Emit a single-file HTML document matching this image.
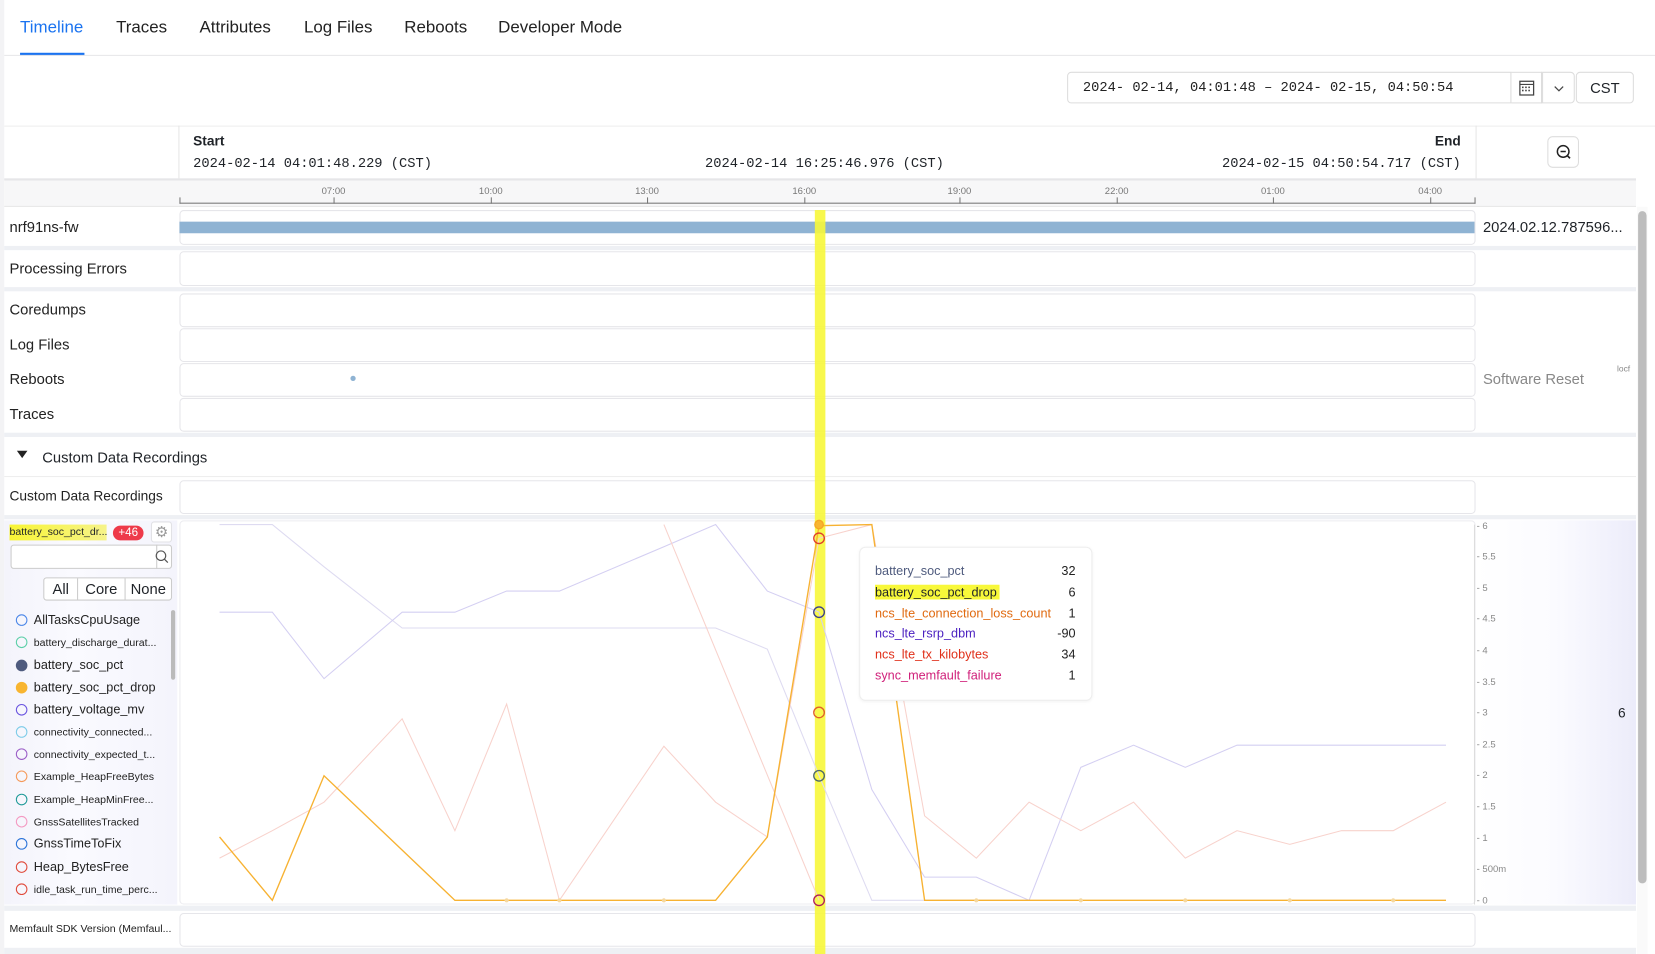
<!DOCTYPE html>
<html><head><meta charset="utf-8">
<style>
*{box-sizing:border-box;margin:0;padding:0}
html,body{width:1655px;height:954px;overflow:hidden;background:#fff;font-family:"Liberation Sans",sans-serif;color:#1f2328}
#w{position:absolute;left:0;top:0;width:1568px;height:904px;transform:scale(1.05548);transform-origin:0 0;background:#fff}
.a{position:absolute}
.tab{position:absolute;top:18px;font-size:16px;color:#222}
.mono{font-family:"Liberation Mono",monospace}
.lbl{position:absolute;left:9px;font-size:14px;color:#222}
.row{position:absolute;left:170px;width:1228px;border:1px solid #e6e6ea;border-radius:4px;background:#fff}
.gap{position:absolute;left:4px;width:1546px;background:#eef0f4}
.tick{position:absolute;top:176px;font-size:9px;color:#777;width:40px;text-align:center}
.tk{position:absolute;top:187px;width:1px;height:6px;background:#777}
.yl{position:absolute;left:1399px;font-size:9px;color:#888}
.li{position:absolute;left:15px;font-size:12px;color:#222;white-space:nowrap}
.li i{display:inline-block;width:11px;height:11px;border-radius:50%;border:1.5px solid;vertical-align:-2px;margin-right:6px}
.li.s{font-size:10px}
.tt{position:absolute;left:829px;font-size:12px}
.tv{position:absolute;left:960px;width:59px;text-align:right;font-size:12px;color:#222}
</style></head><body><div id="w">
<div class="a" style="left:0;top:0;width:4px;height:904px;background:#f3f3f5"></div>
<div class="tab" style="left:19px;color:#1a73f0">Timeline</div>
<div class="tab" style="left:110px">Traces</div>
<div class="tab" style="left:189px">Attributes</div>
<div class="tab" style="left:288px">Log Files</div>
<div class="tab" style="left:383px">Reboots</div>
<div class="tab" style="left:472px">Developer Mode</div>
<div class="a" style="left:19px;top:50px;width:61px;height:3px;background:#1a73f0"></div>
<div class="a" style="left:4px;top:52px;width:1564px;height:1px;background:#e8e8ea"></div>
<div class="a mono" style="left:1011px;top:68px;width:421px;height:30px;border:1px solid #ddd;border-radius:4px 0 0 4px;font-size:13px;padding:6px 14px;color:#222">2024- 02-14, 04:01:48 – 2024- 02-15, 04:50:54</div>
<div class="a" style="left:1432px;top:68px;width:29px;height:30px;border:1px solid #ddd;border-left:none">
<svg width="29" height="30"><rect x="8" y="8" width="13" height="13" fill="none" stroke="#444" stroke-width="1.2"/><line x1="8" y1="11" x2="21" y2="11" stroke="#444"/><g fill="#444"><rect x="10" y="13" width="1.5" height="1.5"/><rect x="13" y="13" width="1.5" height="1.5"/><rect x="16" y="13" width="1.5" height="1.5"/><rect x="10" y="16" width="1.5" height="1.5"/><rect x="13" y="16" width="1.5" height="1.5"/><rect x="16" y="16" width="1.5" height="1.5"/></g></svg></div>
<div class="a" style="left:1461px;top:68px;width:31px;height:30px;border:1px solid #ddd;border-radius:0 4px 4px 0"><svg width="31" height="30"><path d="M11 13l4 4 4-4" fill="none" stroke="#444" stroke-width="1.2"/></svg></div>
<div class="a" style="left:1493px;top:68px;width:55px;height:30px;border:1px solid #ddd;border-radius:4px;font-size:14px;text-align:center;line-height:28px">CST</div>
<div class="a" style="left:4px;top:119px;width:1564px;height:1px;background:#eee"></div>
<div class="a" style="left:169px;top:119px;width:1px;height:51px;background:#e6e6e6"></div>
<div class="a" style="left:1398px;top:119px;width:1px;height:51px;background:#e6e6e6"></div>
<div class="a" style="left:183px;top:126px;font-size:13px;font-weight:bold">Start</div>
<div class="a mono" style="left:183px;top:147px;font-size:13px">2024-02-14 04:01:48.229 (CST)</div>
<div class="a mono" style="left:668px;top:147px;font-size:13px">2024-02-14 16:25:46.976 (CST)</div>
<div class="a" style="left:1350px;top:126px;font-size:13px;font-weight:bold;width:34px;text-align:right">End</div>
<div class="a mono" style="left:1153px;top:147px;font-size:13px;width:231px;text-align:right">2024-02-15 04:50:54.717 (CST)</div>
<div class="a" style="left:1466px;top:129px;width:30px;height:30px;border:1px solid #ddd;border-radius:5px"><svg width="30" height="30"><circle cx="14" cy="13.5" r="5.5" fill="none" stroke="#222" stroke-width="1.4"/><line x1="11.5" y1="13.5" x2="16.5" y2="13.5" stroke="#222" stroke-width="1.4"/><line x1="18" y1="17.5" x2="20.5" y2="20" stroke="#222" stroke-width="1.6"/></svg></div>
<div class="a" style="left:4px;top:169px;width:1546px;height:26px;background:#f7f7f8;border-top:2px solid #e6e6e8"></div>
<div class="a" style="left:170px;top:192px;width:1228px;height:1px;background:#777"></div>
<div class="tk" style="left:170px"></div><div class="tk" style="left:1397px"></div>
<div class="tick" style="left:296px">07:00</div><div class="tk" style="left:316px"></div>
<div class="tick" style="left:445px">10:00</div><div class="tk" style="left:465px"></div>
<div class="tick" style="left:593px">13:00</div><div class="tk" style="left:613px"></div>
<div class="tick" style="left:742px">16:00</div><div class="tk" style="left:762px"></div>
<div class="tick" style="left:889px">19:00</div><div class="tk" style="left:909px"></div>
<div class="tick" style="left:1038px">22:00</div><div class="tk" style="left:1058px"></div>
<div class="tick" style="left:1186px">01:00</div><div class="tk" style="left:1206px"></div>
<div class="tick" style="left:1335px">04:00</div><div class="tk" style="left:1355px"></div>
<div class="a" style="left:4px;top:195px;width:1546px;height:1px;background:#e6e6e6"></div>
<div class="row" style="top:199px;height:33px"></div>
<div class="a" style="left:170px;top:210px;width:1227px;height:11px;background:#8fb3d3"></div>
<div class="lbl" style="top:207px">nrf91ns-fw</div>
<div class="a" style="left:1405px;top:207px;font-size:14px">2024.02.12.787596...</div>
<div class="gap" style="top:233px;height:4px"></div>
<div class="row" style="top:238px;height:33px"></div><div class="lbl" style="top:246px">Processing Errors</div>
<div class="gap" style="top:272px;height:4px"></div>
<div class="row" style="top:278px;height:32px"></div><div class="lbl" style="top:285px">Coredumps</div>
<div class="row" style="top:311px;height:32px"></div><div class="lbl" style="top:318px">Log Files</div>
<div class="row" style="top:344px;height:32px"></div><div class="lbl" style="top:351px">Reboots</div>
<div class="a" style="left:332px;top:356px;width:5px;height:5px;border-radius:50%;background:#8fb3d3"></div>
<div class="a" style="left:1405px;top:351px;font-size:14px;color:#888">Software Reset</div>
<div class="a" style="left:1532px;top:345px;font-size:8px;color:#888">locf</div>
<div class="row" style="top:377px;height:32px"></div><div class="lbl" style="top:384px">Traces</div>
<div class="gap" style="top:410px;height:4px"></div>
<div class="a" style="left:16px;top:427px;width:0;height:0;border-left:5px solid transparent;border-right:5px solid transparent;border-top:7px solid #222"></div>
<div class="a" style="left:40px;top:425px;font-size:14px">Custom Data Recordings</div>
<div class="a" style="left:4px;top:451px;width:1546px;height:1px;background:#eee"></div>
<div class="row" style="top:455px;height:32px"></div><div class="lbl" style="top:462px;font-size:13px">Custom Data Recordings</div>
<div class="gap" style="top:488px;height:4px"></div>
<div class="a" style="left:4px;top:493px;width:164px;height:364px;background:linear-gradient(90deg,#f4f4fb,#fafaff 40%,#f4f4fc)"></div>
<div class="a" style="left:1398px;top:493px;width:152px;height:364px;background:linear-gradient(90deg,#fff,#fbfbff 50%,#ececfa)"></div>
<div class="row" style="top:493px;height:364px;border-color:#ececf0"></div>
<div class="gap" style="top:858px;height:5px"></div>
<div class="row" style="top:865px;height:32px"></div>
<div class="lbl" style="top:875px;font-size:10px">Memfault SDK Version (Memfaul...</div>
<div class="gap" style="top:898px;height:6px"></div>
<div class="a" style="left:772px;top:199px;width:10px;height:705px;background:#f7f73a;opacity:.9"></div>
<div class="a" style="left:9px;top:497px;width:92px;height:15px;background:linear-gradient(90deg,#f8f435,#f6f38a);font-size:10px;line-height:15px;white-space:nowrap;overflow:hidden">battery_soc_pct_dr...</div>
<div class="a" style="left:107px;top:498px;width:29px;height:14px;border-radius:7px;background:#ee3a4a;color:#fff;font-size:11px;text-align:center;line-height:14px">+46</div>
<div class="a" style="left:143px;top:494px;width:20px;height:20px;border:1px solid #e2e2e6;border-radius:3px;background:#fff;color:#999;font-size:14px;text-align:center;line-height:18px">⚙</div>
<div class="a" style="left:10px;top:516px;width:153px;height:23px;border:1px solid #ccc;border-radius:3px;background:#fff"></div>
<div class="a" style="left:148px;top:516px;width:1px;height:23px;background:#ccc"></div>
<svg class="a" style="left:143px;top:516px" width="20" height="23"><circle cx="9.5" cy="10.5" r="4.5" fill="none" stroke="#555" stroke-width="1.1"/><line x1="12.8" y1="13.8" x2="16" y2="17" stroke="#555" stroke-width="1.2"/></svg>
<div class="a" style="left:41px;top:547px;width:122px;height:22px;border:1px solid #ccc;border-radius:3px;background:#fff;font-size:14px;line-height:20px">
<span class="a" style="left:0;width:31px;text-align:center">All</span><span class="a" style="left:31px;width:1px;height:20px;background:#ccc"></span>
<span class="a" style="left:32px;width:44px;text-align:center">Core</span><span class="a" style="left:76px;width:1px;height:20px;background:#ccc"></span>
<span class="a" style="left:77px;width:43px;text-align:center">None</span></div>
<div class="a" style="left:162px;top:578px;width:4px;height:66px;border-radius:2px;background:#bbb"></div>
<div class="li" style="top:580px"><i style="border-color:#4a86e8"></i>AllTasksCpuUsage</div>
<div class="li s" style="top:603px"><i style="border-color:#5ccfa8"></i>battery_discharge_durat...</div>
<div class="li" style="top:623px"><i style="border-color:#4f5b7e;background:#4f5b7e"></i>battery_soc_pct</div>
<div class="li" style="top:644px"><i style="border-color:#f8b530;background:#f8b530"></i>battery_soc_pct_drop</div>
<div class="li" style="top:665px"><i style="border-color:#6a55e0"></i>battery_voltage_mv</div>
<div class="li s" style="top:688px"><i style="border-color:#7ccbe8"></i>connectivity_connected...</div>
<div class="li s" style="top:709px"><i style="border-color:#9a5cc6"></i>connectivity_expected_t...</div>
<div class="li s" style="top:730px"><i style="border-color:#f59a5a"></i>Example_HeapFreeBytes</div>
<div class="li s" style="top:752px"><i style="border-color:#1e9a98"></i>Example_HeapMinFree...</div>
<div class="li s" style="top:773px"><i style="border-color:#f49ac2"></i>GnssSatellitesTracked</div>
<div class="li" style="top:792px"><i style="border-color:#2a73d8"></i>GnssTimeToFix</div>
<div class="li" style="top:814px"><i style="border-color:#e04a3a"></i>Heap_BytesFree</div>
<div class="li s" style="top:837px"><i style="border-color:#e04a3a"></i>idle_task_run_time_perc...</div>
<svg class="a" style="left:0;top:0" width="1568" height="904">
<g fill="none" stroke-width="1">
<polyline stroke="#dedbf1" points="208,497 258,497 307,537 381,595 431,595 480,595 530,595 629,595 678,595 727,615 776,735 826,853 876,853 925,853 975,853"/>
<polyline stroke="#d4cff2" points="208,580 258,580 307,643 381,580 431,580 480,560 530,560 629,518 678,497 727,560 776,580 826,748 876,831 925,831 975,853 1024,727 1074,706 1123,727 1172,706 1222,706 1271,706 1320,706 1370,706"/>
<polyline stroke="#f8d2cc" points="208,813 258,787 307,760 381,681 431,787 480,667 530,853 629,707 678,760 727,793 776,510 826,497 876,773 925,813 975,760 1024,787 1074,760 1123,813 1172,787 1222,800 1271,787 1320,787 1370,760"/>
<polyline stroke="#f8d2cc" points="629,497 776,853"/>
<polyline stroke="#f7b232" stroke-width="1.3" points="208,793 258,853 307,735 431,853 480,853 530,853 629,853 678,853 727,793 776,498 826,497 876,853 925,853 975,853 1024,853 1074,853 1123,853 1172,853 1222,853 1271,853 1320,853 1370,853"/>
<line x1="1397" y1="497" x2="1397" y2="857" stroke="#ddd"/>
</g>
<g stroke-width="1.3" fill="none">
<circle cx="776" cy="497" r="4" fill="#f8b530" stroke="#f5a623"/>
<circle cx="776" cy="510" r="5" stroke="#e0402a"/>
<circle cx="776" cy="580" r="5" stroke="#3b3f8a"/>
<circle cx="776" cy="675" r="5" stroke="#e0602a"/>
<circle cx="776" cy="735" r="5" stroke="#4f6a6a"/>
<circle cx="776" cy="853" r="5" stroke="#b0205a"/>
</g>
<g fill="#f5d8a0"><circle cx="480" cy="853" r="2"/><circle cx="530" cy="853" r="2"/><circle cx="629" cy="853" r="2"/><circle cx="925" cy="853" r="2"/><circle cx="1024" cy="853" r="2"/><circle cx="1123" cy="853" r="2"/><circle cx="1222" cy="853" r="2"/><circle cx="1320" cy="853" r="2"/></g>
</svg>
<div class="yl" style="top:493px">- 6</div><div class="yl" style="top:522px">- 5.5</div><div class="yl" style="top:552px">- 5</div><div class="yl" style="top:581px">- 4.5</div><div class="yl" style="top:611px">- 4</div><div class="yl" style="top:641px">- 3.5</div><div class="yl" style="top:670px">- 3</div><div class="yl" style="top:700px">- 2.5</div><div class="yl" style="top:729px">- 2</div><div class="yl" style="top:759px">- 1.5</div><div class="yl" style="top:789px">- 1</div><div class="yl" style="top:818px">- 500m</div><div class="yl" style="top:848px">- 0</div>
<div class="a" style="left:1533px;top:668px;font-size:13px">6</div>
<div class="a" style="left:814px;top:518px;width:221px;height:146px;background:#fff;border:1px solid #eee;border-radius:6px;box-shadow:0 1px 3px rgba(0,0,0,.05)"></div>
<div class="tt" style="top:534px;color:#4f5b7e">battery_soc_pct</div><div class="tv" style="top:534px">32</div>
<div class="tt" style="top:554px;background:#f8f83a;padding:0 3px 0 0">battery_soc_pct_drop</div><div class="tv" style="top:554px">6</div>
<div class="tt" style="top:574px;color:#e06a10">ncs_lte_connection_loss_count</div><div class="tv" style="top:574px">1</div>
<div class="tt" style="top:593px;color:#4a1fc0">ncs_lte_rsrp_dbm</div><div class="tv" style="top:593px">-90</div>
<div class="tt" style="top:613px;color:#e0301a">ncs_lte_tx_kilobytes</div><div class="tv" style="top:613px">34</div>
<div class="tt" style="top:633px;color:#d0207a">sync_memfault_failure</div><div class="tv" style="top:633px">1</div>
<div class="a" style="left:1551px;top:196px;width:10px;height:708px;background:#fafafa"></div>
<div class="a" style="left:1552px;top:200px;width:8px;height:637px;border-radius:4px;background:#bdbdbd"></div>
</div></body></html>
